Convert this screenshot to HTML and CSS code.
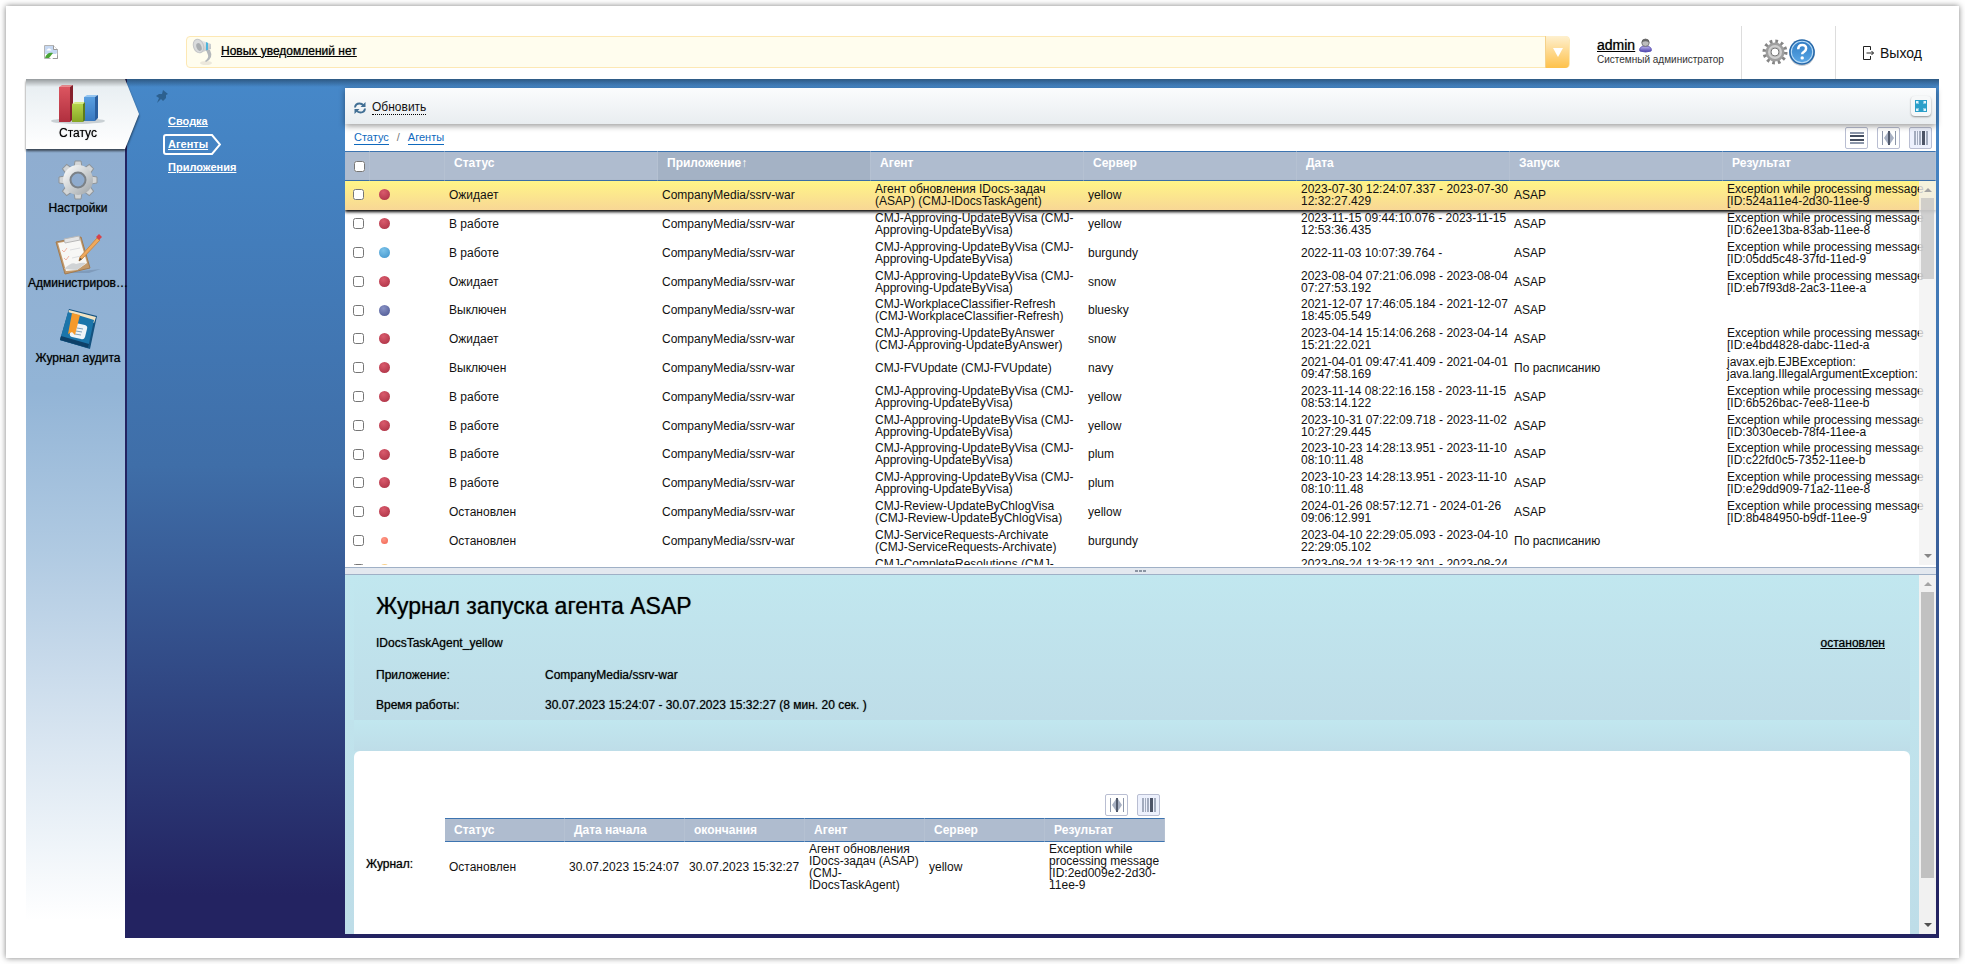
FILE: index.html
```
<!DOCTYPE html>
<html lang="ru">
<head>
    <meta charset="UTF-8">
    <meta name="viewport" content="width=device-width, initial-scale=1.0">
    <title>Агенты</title>
    <link rel="stylesheet" href="styles.css">
</head>
<body>
    <div class="page">
        <header class="header">
            <a class="logo" href="#" aria-label="Логотип">
                <svg width="16" height="16" viewBox="0 0 16 16">
                    <path d="M1.500 1.500h9l4 4v9h-13z" fill="#fff" stroke="#b4b4b4"/>
                    <path d="M2 2h8.500l3.500 4v4H2z" fill="#c6d8f2"/>
                    <path d="M10.500 1.500v4h4" fill="#fff" stroke="#9a9a9a"/>
                    <path d="M3.500 6.500q0-1.500 1.500-1.500 1-1.500 2 0 1.500 0 1.500 1.500z" fill="#fff"/>
                    <path d="M2 14c1-4 4-6 8-5l-4 5z" fill="#4aa436"/>
                    <path d="M7 15l7-6v2l-5 4z" fill="#fff"/>
                    <path d="M10 14.500h4.500v-3" fill="none" stroke="#999"/>
                </svg>
            </a>

            <div class="notice">
                <svg class="notice-icon" width="24" height="28" viewBox="0 0 24 28">
                    <defs>
                        <linearGradient id="horn" x1="0" y1="0" x2="1" y2="1">
                            <stop offset="0" stop-color="#fafafa"/>
                            <stop offset="1" stop-color="#b5b9bc"/>
                        </linearGradient>
                    </defs>
                    <ellipse cx="14" cy="25" rx="6" ry="2" fill="#ece8dc"/>
                    <path d="M6 1l13 5v5L8 15z" fill="url(#horn)"/>
                    <ellipse cx="6.500" cy="8" rx="5" ry="7" transform="rotate(-20 6.500 8)" fill="#d9dbdc" stroke="#c3c5c7"/>
                    <ellipse cx="7" cy="9" rx="2.500" ry="4" transform="rotate(-20 7 9)" fill="#a9adb0"/>
                    <path d="M14 4l2 1v7l-2 1z" fill="#4db5dc"/>
                    <path d="M14 12l4 0q2 4 1 7t-5 5l-1-1q4-3 3-6z" fill="#b4b8bb"/>
                </svg>
                <a class="notice-link" href="#">Новых уведомлений нет</a>
                <button class="notice-toggle" type="button" aria-label="Показать уведомления">
                    <svg width="10" height="9" viewBox="0 0 10 9"><path d="M0 0h10L5 9z" fill="#fff"/></svg>
                </button>
            </div>

            <div class="user">
                <div class="user-name">
                    <a href="#">admin</a>
                    <svg width="13" height="15" viewBox="0 0 14 16">
                        <defs>
                            <linearGradient id="suit" x1="0" y1="0" x2="0" y2="1">
                                <stop offset="0" stop-color="#b9b1ea"/>
                                <stop offset="1" stop-color="#4b3fae"/>
                            </linearGradient>
                        </defs>
                        <path d="M1 14c-1-3 1-5 4-5h4c3 0 5 2 4 5q-6 2-12 0z" fill="url(#suit)" stroke="#5a4fb0"/>
                        <circle cx="7" cy="5" r="4" fill="#bdbdbd" stroke="#777"/>
                        <path d="M3 5q0-4 4-4t4 4q-4-3-8 0z" fill="#666"/>
                    </svg>
                </div>
                <div class="user-role">Системный администратор</div>
            </div>

            <div class="tools">
                <button class="icon-button" type="button" aria-label="Настройки">
                    <svg width="26" height="26" viewBox="0 0 26 26">
                        <circle cx="13" cy="13" r="10.500" fill="none" stroke="#858585" stroke-width="4" stroke-dasharray="2.600 2.898"/>
                        <circle cx="13" cy="13" r="7" fill="none" stroke="#9f9f9f" stroke-width="5"/>
                        <circle cx="13" cy="13" r="6" fill="none" stroke="#cfcfcf" stroke-width="2"/>
                        <circle cx="13" cy="13" r="4" fill="#fff" stroke="#777"/>
                    </svg>
                </button>
                <button class="icon-button" type="button" aria-label="Справка">
                    <svg width="28" height="30" viewBox="0 0 26 28">
                        <defs>
                            <linearGradient id="help" x1="0" y1="0" x2="0" y2="1">
                                <stop offset="0" stop-color="#2f7cc4"/>
                                <stop offset="1" stop-color="#5aa7e6"/>
                            </linearGradient>
                        </defs>
                        <circle cx="13" cy="15" r="12" fill="#c9ccd0"/>
                        <circle cx="13" cy="14" r="12" fill="#2668a9"/>
                        <circle cx="13" cy="14" r="10" fill="url(#help)" stroke="#b9dcf7"/>
                        <path d="M9.500 11.500q0-4 3.700-4t3.600 3.300q0 2-2 3-1.600.8-1.600 2.400" fill="none" stroke="#fff" stroke-width="2.400"/>
                        <circle cx="13.200" cy="19.500" r="1.600" fill="#fff"/>
                    </svg>
                </button>
            </div>

            <a class="logout" href="#">
                <svg width="12" height="16" viewBox="0 0 12 16" fill="none" stroke="#222">
                    <path d="M8.500 5v-3.500h-7v13h7V11M4.500 8h7M9.500 6l2 2-2 2"/>
                </svg>
                Выход
            </a>
        </header>

        <main class="main">
            <nav class="nav">
                <a class="nav-item active" href="#">
                    <svg class="nav-icon" width="56" height="42" viewBox="0 0 56 42">
                        <defs>
                            <linearGradient id="red" x1="0" y1="0" x2="0" y2="1">
                                <stop offset="0" stop-color="#dc5560"/>
                                <stop offset="1" stop-color="#b02f3e"/>
                            </linearGradient>
                            <linearGradient id="green" x1="0" y1="0" x2="0" y2="1">
                                <stop offset="0" stop-color="#b5d34a"/>
                                <stop offset="1" stop-color="#86a625"/>
                            </linearGradient>
                            <linearGradient id="blue" x1="0" y1="0" x2="0" y2="1">
                                <stop offset="0" stop-color="#5a9fe0"/>
                                <stop offset="1" stop-color="#3878c0"/>
                            </linearGradient>
                        </defs>
                        <ellipse cx="28" cy="38" rx="27" ry="3" fill="#c9d0d4"/>
                        <path d="M9 4l3-2h11l-3 2z" fill="#ee8d92"/>
                        <path d="M9 4h11v35H9z" fill="url(#red)"/>
                        <path d="M20 4l3-2v34l-3 3z" fill="#86202c"/>
                        <path d="M34 14l3-2h11l-3 2z" fill="#95c5f0"/>
                        <path d="M34 14h11v24H34z" fill="url(#blue)"/>
                        <path d="M45 14l3-2v23l-3 3z" fill="#2b5f9f"/>
                        <path d="M22 21l3-2h10l-2 2z" fill="#d5ea85"/>
                        <path d="M22 21h11v18H22z" fill="url(#green)"/>
                        <path d="M33 21l2-2v18l-2 2z" fill="#5d7b1c"/>
                    </svg>
                    <span>Статус</span>
                </a>
                <a class="nav-item" href="#">
                    <svg class="nav-icon" width="40" height="42" viewBox="0 0 40 42">
                        <defs>
                            <linearGradient id="steel" x1="0" y1="0" x2="1" y2="1">
                                <stop offset="0" stop-color="#f4f5f5"/>
                                <stop offset="1" stop-color="#a9aeb1"/>
                            </linearGradient>
                        </defs>
                        <g transform="translate(20 22)">
                            <g fill="#d3d5d6" stroke="#8e9499">
                                <path d="M-4-13l1-6h6l1 6z"/>
                                <path d="M-4-13l1-6h6l1 6z" transform="rotate(45)"/>
                                <path d="M-4-13l1-6h6l1 6z" transform="rotate(90)"/>
                                <path d="M-4-13l1-6h6l1 6z" transform="rotate(135)"/>
                                <path d="M-4-13l1-6h6l1 6z" transform="rotate(180)"/>
                                <path d="M-4-13l1-6h6l1 6z" transform="rotate(225)"/>
                                <path d="M-4-13l1-6h6l1 6z" transform="rotate(270)"/>
                                <path d="M-4-13l1-6h6l1 6z" transform="rotate(315)"/>
                            </g>
                            <circle r="11" fill="none" stroke="url(#steel)" stroke-width="8"/>
                            <circle r="7.500" fill="#8fabcd" stroke="#7b8187" stroke-width="2"/>
                        </g>
                    </svg>
                    <span>Настройки</span>
                </a>
                <a class="nav-item" href="#">
                    <svg class="nav-icon" width="50" height="42" viewBox="0 0 50 42">
                        <path d="M8 40l40-4-12 4z" fill="#7f9bbb"/>
                        <path d="M3 9l25-5 9 31-25 6z" fill="#c39a6b" stroke="#a27b50"/>
                        <path d="M5 10l22-4 7 24-10 7-11 1z" fill="#f7f7f5"/>
                        <path d="M11 36q8-8 12-5 6-2 10-1l-9 7z" fill="#d0d3d5"/>
                        <path d="M11 6l15-3 1 4-15 3z" fill="#e4e4e4" stroke="#b8b8b8"/>
                        <path d="M9 17l2 2 3-4M11 25l2 2 3-4" fill="none" stroke="#f0b5a5"/>
                        <path d="M17 17l10-2M19 25l9-2" fill="none" stroke="#dcdee0"/>
                        <path d="M44 5l3 2-18 19-3 2 1-4z" fill="#f0a95c" stroke="#c58a4c"/>
                        <path d="M43 4l3-3 3 3-3 3z" fill="#d6424a"/>
                        <path d="M26 28l1-3 2 1z" fill="#444"/>
                    </svg>
                    <span>Администриров…</span>
                </a>
                <a class="nav-item" href="#">
                    <svg class="nav-icon" width="42" height="42" viewBox="0 0 42 42">
                        <path d="M12 1l28 7-7 33-30-9z" fill="#14527f"/>
                        <path d="M12 2l27 7-2 6-26-8z" fill="#f1e3c4"/>
                        <path d="M11 4l26 8-6 28L3 32z" fill="#1b75aa"/>
                        <path d="M3 32l28 8 1-4-28-8z" fill="#0e4068"/>
                        <path d="M14 14l14 3q3 1 2 4l-2 8q-1 3-4 2l-9-2q-3-1-2-4z" fill="#eef4f8"/>
                        <path d="M20 20l6 1M19 23l6 1M18 26l6 1" stroke="#7ea2bb"/>
                        <path d="M15 5l8 2-5 20-3-3-4 2z" fill="#f59a2b"/>
                    </svg>
                    <span>Журнал аудита</span>
                </a>
            </nav>

            <div class="subnav">
                <svg class="pin" width="12" height="13" viewBox="0 0 12 13">
                    <path d="M7 0l5 4-2 1v3l-3 3-2-2-4 4 2-5-3-2 3-2 3 0z" fill="#2c608f"/>
                </svg>
                <a class="subnav-link" href="#">Сводка</a>
                <a class="subnav-link current" href="#">
                    <svg class="tag" width="58" height="21" viewBox="0 0 58 21" fill="none" stroke="#fff" stroke-width="2">
                        <path d="M3 1h46l8 9.500-8 9.500H3q-2 0-2-2V3q0-2 2-2z"/>
                    </svg>Агенты</a>
                <a class="subnav-link" href="#">Приложения</a>
            </div>

            <section class="content">
                <div class="list-pane">
                    <div class="toolbar">
                        <button class="refresh" type="button">
                            <svg width="12" height="12" viewBox="0 0 12 12" fill="none" stroke="#416f94" stroke-width="2">
                                <path d="M1 5.500Q1.500 1.500 5.500 1.500q2.500 0 4 2M11 6.500q-.5 4-4.500 4-2.500 0-4-2"/>
                                <path d="M11.500 0v5h-5zM.5 12V7h5z" fill="#416f94" stroke="none"/>
                            </svg>
                            <span>Обновить</span>
                        </button>
                        <button class="fullscreen" type="button" aria-label="На весь экран">
                            <svg width="12" height="12" viewBox="0 0 12 12">
                                <path d="M0 0h12v12H0z" fill="#2b9fc9"/>
                                <path d="M1 1h3L3 2l1 1-1 1-1-1-1 1zM11 1v3l-1-1-1 1-1-1 1-1-1-1zM1 11V8l1 1 1-1 1 1-1 1 1 1zM11 11H8l1-1-1-1 1-1 1 1 1-1z" fill="#e2f4fb"/>
                            </svg>
                        </button>
                    </div>
                    <div class="path-bar">
                        <div class="breadcrumbs"><a href="#">Статус</a> <i>/</i> <a href="#">Агенты</a></div>
                        <div class="view-buttons">
                            <button type="button" aria-label="Строки">
                                <svg width="14" height="14" viewBox="0 0 14 14">
                                    <path d="M0 1h14v2H0zM0 11h14v2H0z" fill="#8d97aa"/><path d="M0 4h14v2H0zM0 8h14v2H0z" fill="#454e60"/>
                                </svg>
                            </button>
                            <button type="button" aria-label="Ширина столбцов">
                                <svg width="14" height="14" viewBox="0 0 14 14">
                                    <path d="M0 0h1v14H0zM13 0h1v14h-1z" fill="#8d97aa"/><path d="M6 1v12L2 7zM8 1v12l4-6z" fill="#a7b0c2"/><path d="M6 0h2v14H6z" fill="#515a6c"/>
                                </svg>
                            </button>
                            <button class="on" type="button" aria-label="Столбцы">
                                <svg width="14" height="14" viewBox="0 0 14 14">
                                    <path d="M0 0h2v14H0zM3 0h1v14H3zM5 0h2v14H5zM12 0h2v14h-2z" fill="#a3acbe"/><path d="M8 0h3v14H8z" fill="#4d5567"/>
                                </svg>
                            </button>
                        </div>
                    </div>
                    <div class="table-area">
                        <table class="grid">
                            <thead>
                                <tr>
                                    <th class="col-check"><input type="checkbox" aria-label="Выбрать все"></th>
                                    <th class="col-dot"></th>
                                    <th>Статус</th>
                                    <th class="sorted">Приложение↑</th>
                                    <th>Агент</th>
                                    <th>Сервер</th>
                                    <th>Дата</th>
                                    <th>Запуск</th>
                                    <th>Результат</th>
                                </tr>
                            </thead>
                            <tbody id="agents"></tbody>
                        </table>
                        <div class="scrollbar overlay">
                            <span class="arrow up"></span>
                            <span class="thumb"></span>
                            <span class="arrow down"></span>
                        </div>
                    </div>
                </div>

                <div class="splitter"><span></span><span></span><span></span></div>

                <div class="detail-pane">
                    <div class="detail">
                        <div class="summary">
                            <h1>Журнал запуска агента ASAP</h1>
                            <div class="summary-row">
                                <span>IDocsTaskAgent_yellow</span>
                                <a href="#">остановлен</a>
                            </div>
                            <dl>
                                <dt>Приложение:</dt>
                                <dd>CompanyMedia/ssrv-war</dd>
                                <dt>Время работы:</dt>
                                <dd>30.07.2023 15:24:07 - 30.07.2023 15:32:27 (8 мин. 20 сек. )</dd>
                            </dl>
                        </div>
                        <div class="strip"></div>
                        <div class="journal">
                            <div class="journal-label">Журнал:</div>
                            <div class="journal-body">
                                <div class="view-buttons">
                                    <button type="button" aria-label="Ширина столбцов">
                                        <svg width="14" height="14" viewBox="0 0 14 14">
                                            <path d="M0 0h1v14H0zM13 0h1v14h-1z" fill="#8d97aa"/><path d="M6 1v12L2 7zM8 1v12l4-6z" fill="#a7b0c2"/><path d="M6 0h2v14H6z" fill="#515a6c"/>
                                        </svg>
                                    </button>
                                    <button class="on" type="button" aria-label="Столбцы">
                                        <svg width="14" height="14" viewBox="0 0 14 14">
                                            <path d="M0 0h2v14H0zM3 0h1v14H3zM5 0h2v14H5zM12 0h2v14h-2z" fill="#a3acbe"/><path d="M8 0h3v14H8z" fill="#4d5567"/>
                                        </svg>
                                    </button>
                                </div>
                                <table class="grid small">
                                    <thead>
                                        <tr>
                                            <th>Статус</th>
                                            <th>Дата начала</th>
                                            <th>окончания</th>
                                            <th>Агент</th>
                                            <th>Сервер</th>
                                            <th>Результат</th>
                                        </tr>
                                    </thead>
                                    <tbody>
                                        <tr>
                                            <td>Остановлен</td>
                                            <td>30.07.2023 15:24:07</td>
                                            <td>30.07.2023 15:32:27</td>
                                            <td>Агент обновления IDocs-задач (ASAP) (CMJ-IDocsTaskAgent)</td>
                                            <td>yellow</td>
                                            <td>Exception while processing message [ID:2ed009e2-2d30-11ee-9</td>
                                        </tr>
                                    </tbody>
                                </table>
                            </div>
                        </div>
                    </div>
                    <div class="scrollbar">
                        <span class="arrow up"></span>
                        <span class="thumb"></span>
                        <span class="arrow down"></span>
                    </div>
                </div>
            </section>
        </main>
    </div>

    <script>
        const visa = 'CMJ-Approving-UpdateByVisa (CMJ-Approving-UpdateByVisa)';
        const error = 'Exception while processing message ';
        // dot, status, agent, server, date, start mode, result
        const agents = [
            ['red', 'Ожидает', 'Агент обновления IDocs-задач (ASAP) (CMJ-IDocsTaskAgent)', 'yellow', '2023-07-30 12:24:07.337 - 2023-07-30 12:32:27.429', 'ASAP', error + '[ID:524a11e4-2d30-11ee-9'],
            ['red', 'В работе', visa, 'yellow', '2023-11-15 09:44:10.076 - 2023-11-15 12:53:36.435', 'ASAP', error + '[ID:62ee13ba-83ab-11ee-8'],
            ['sky', 'В работе', visa, 'burgundy', '2022-11-03 10:07:39.764 -', 'ASAP', error + '[ID:05dd5c48-37fd-11ed-9'],
            ['red', 'Ожидает', visa, 'snow', '2023-08-04 07:21:06.098 - 2023-08-04 07:27:53.192', 'ASAP', error + '[ID:eb7f93d8-2ac3-11ee-a'],
            ['navy', 'Выключен', 'CMJ-WorkplaceClassifier-Refresh (CMJ-WorkplaceClassifier-Refresh)', 'bluesky', '2021-12-07 17:46:05.184 - 2021-12-07 18:45:05.549', 'ASAP', ''],
            ['red', 'Ожидает', 'CMJ-Approving-UpdateByAnswer (CMJ-Approving-UpdateByAnswer)', 'snow', '2023-04-14 15:14:06.268 - 2023-04-14 15:21:22.021', 'ASAP', error + '[ID:e4bd4828-dabc-11ed-a'],
            ['red', 'Выключен', 'CMJ-FVUpdate (CMJ-FVUpdate)', 'navy', '2021-04-01 09:47:41.409 - 2021-04-01 09:47:58.169', 'По расписанию', 'javax.ejb.EJBException: java.lang.IllegalArgumentException:'],
            ['red', 'В работе', visa, 'yellow', '2023-11-14 08:22:16.158 - 2023-11-15 08:53:14.122', 'ASAP', error + '[ID:6b526bac-7ee8-11ee-b'],
            ['red', 'В работе', visa, 'yellow', '2023-10-31 07:22:09.718 - 2023-11-02 10:27:29.445', 'ASAP', error + '[ID:3030eceb-78f4-11ee-a'],
            ['red', 'В работе', visa, 'plum', '2023-10-23 14:28:13.951 - 2023-11-10 08:10:11.48', 'ASAP', error + '[ID:c22fd0c5-7352-11ee-b'],
            ['red', 'В работе', visa, 'plum', '2023-10-23 14:28:13.951 - 2023-11-10 08:10:11.48', 'ASAP', error + '[ID:e29dd909-71a2-11ee-8'],
            ['red', 'Остановлен', 'CMJ-Review-UpdateByChlogVisa (CMJ-Review-UpdateByChlogVisa)', 'yellow', '2024-01-26 08:57:12.71 - 2024-01-26 09:06:12.991', 'ASAP', error + '[ID:8b484950-b9df-11ee-9'],
            ['coral', 'Остановлен', 'CMJ-ServiceRequests-Archivate (CMJ-ServiceRequests-Archivate)', 'burgundy', '2023-04-10 22:29:05.093 - 2023-04-10 22:29:05.102', 'По расписанию', ''],
            ['amber', 'Остановлен', 'CMJ-CompleteResolutions (CMJ-CompleteResolutions)', 'plum', '2023-08-24 13:26:12.301 - 2023-08-24 13:26:14.120', 'По расписанию', 'Response status: 0 updated 0']
        ];

        const body = document.getElementById('agents');
        agents.forEach(([dot, status, agent, server, date, mode, result], index) => {
            const row = document.createElement('tr');
            if (index === 0) {
                row.className = 'selected';
            }
            row.innerHTML = `
                <td class="col-check"><input type="checkbox" aria-label="${agent}"></td>
                <td class="col-dot"><span class="dot ${dot}"></span></td>
                <td>${status}</td>
                <td>CompanyMedia/ssrv-war</td>
                <td>${agent}</td>
                <td>${server}</td>
                <td>${date}</td>
                <td>${mode}</td>
                <td>${result}</td>`;
            body.appendChild(row);
        });
    </script>
</body>
</html>
```

FILE: styles.css
```
* {
    margin: 0;
    padding: 0;
    box-sizing: border-box;
}

body {
    font-family: "Liberation Sans", Arial, sans-serif;
    font-size: 12px;
    color: #111;
    background: #fff;
    height: 100vh;
    padding: 6px;
    overflow: hidden;
}

a {
    color: inherit;
}

button {
    font: inherit;
    color: inherit;
    border: none;
    background: none;
    cursor: pointer;
}

svg {
    display: block;
}

.page {
    height: 100%;
    padding: 20px;
    display: flex;
    flex-direction: column;
    background: #fff;
    box-shadow: 0 0 6px rgba(0, 0, 0, 0.5);
}

/* Header */
.header {
    height: 53px;
    flex: none;
    display: flex;
}

.logo {
    width: 160px;
    padding: 18px 17px;
}

.notice {
    flex: 1;
    height: 32px;
    margin-top: 10px;
    padding-left: 5px;
    display: flex;
    align-items: center;
    background: #fffdee;
    border: 1px solid #fde8b4;
    border-radius: 4px;
}

.notice-link {
    margin-left: 5px;
    padding-bottom: 3px;
    color: #000;
    text-shadow: 0 0 1px rgba(0, 0, 0, 0.6);
}

.notice-toggle {
    width: 24px;
    height: 32px;
    margin-left: auto;
    display: flex;
    align-items: center;
    justify-content: center;
    border-radius: 0 4px 4px 0;
    border-left: 1px solid #f5d28a;
    background: linear-gradient(#fef0cf, #fec14a);
}

.user {
    width: 171px;
    padding: 11px 0 0 27px;
    white-space: nowrap;
}

.user-name {
    display: flex;
    align-items: center;
    gap: 4px;
    height: 16px;
    font-size: 14px;
    color: #000;
    text-shadow: 0 0 1px rgba(0, 0, 0, 0.6);
}

.user-role {
    margin-top: 1px;
    font-size: 10px;
    line-height: 12px;
    color: #333;
}

.tools {
    width: 95px;
    padding-bottom: 2px;
    display: flex;
    align-items: center;
    justify-content: center;
    border-left: 1px solid #ddd;
    border-right: 1px solid #ddd;
}

.logout {
    width: 103px;
    display: flex;
    align-items: center;
    gap: 6px;
    padding-left: 26px;
    font-size: 14px;
    text-decoration: none;
}

/* Main */
.main {
    position: relative;
    flex: 1;
    min-height: 0;
    display: flex;
    background: linear-gradient(#4688c9, #3f6ea8 45%, #232361 95%);
}

.main::before {
    content: "";
    position: absolute;
    z-index: 3;
    top: 0;
    left: 0;
    right: 0;
    height: 8px;
    background: linear-gradient(rgba(0, 0, 0, 0.35), transparent);
}

.nav {
    width: 101px;
    flex: none;
    border-right: 2px solid #232361;
    background: linear-gradient(#8eabce, #92b4d6 36%, #b0cae2 55%, #fff 98%);
}

.nav-item {
    height: 75px;
    display: flex;
    flex-direction: column;
    align-items: center;
    justify-content: flex-end;
    padding: 0 0 8px 5px;
    position: relative;
    color: #000;
    line-height: 16px;
    text-decoration: none;
    white-space: nowrap;
    text-shadow: 0 0 1px rgba(0, 0, 0, 0.6);
}

.nav-item.active {
    height: 70px;
    z-index: 2;
    filter: drop-shadow(0 2px 1px rgba(0, 0, 0, 0.6));
    background: linear-gradient(#e6edf1, #fff);
}

.nav-item.active::after {
    content: "";
    position: absolute;
    z-index: 2;
    top: 0;
    left: 99px;
    width: 14px;
    height: 70px;
    clip-path: polygon(0 0, 100% 50%, 0 100%);
    background: linear-gradient(#e6edf1, #fff);
}

.subnav {
    width: 218px;
    flex: none;
    padding: 11px 0 0 29px;
    display: flex;
    flex-direction: column;
    align-items: flex-start;
}

.pin {
    margin-bottom: 6px;
}

.subnav-link {
    position: relative;
    margin-left: 12px;
    padding: 4px 0 3px;
    line-height: 16px;
    font-size: 11px;
    font-weight: bold;
    color: #fff;
}

.tag {
    position: absolute;
    top: 2px;
    left: -5px;
}

.content {
    flex: 1;
    min-width: 0;
    margin: 9px 3px 4px 0;
    display: grid;
    grid-template-rows: 4fr 8px 3fr;
    background: #fff;
}

/* Agents list */
.list-pane {
    min-height: 0;
    display: flex;
    flex-direction: column;
    padding-bottom: 2px;
}

.toolbar {
    position: relative;
    z-index: 1;
    height: 36px;
    flex: none;
    padding: 0 5px 0 9px;
    display: flex;
    align-items: center;
    justify-content: space-between;
    background: linear-gradient(#fbfcfd, #e9edf0);
    box-shadow: 0 2px 6px rgba(0, 0, 0, 0.4);
}

.refresh {
    display: flex;
    align-items: center;
    gap: 6px;
    padding-top: 3px;
}

.refresh span {
    line-height: 14px;
    border-bottom: 1px dotted #000;
}

.fullscreen {
    width: 20px;
    height: 20px;
    display: flex;
    align-items: center;
    justify-content: center;
    border-radius: 4px;
    background: #f6f8f9;
    box-shadow: 0 1px 2px rgba(0, 0, 0, 0.4);
}

.path-bar {
    height: 27px;
    flex: none;
    padding: 0 4px 0 9px;
    display: flex;
    align-items: center;
    justify-content: space-between;
}

.breadcrumbs {
    display: flex;
    gap: 8px;
    font-size: 11px;
    line-height: 14px;
    color: #777;
}

.breadcrumbs a {
    color: #0f69bd;
    text-decoration: none;
    border-bottom: 1px solid #0f69bd;
}

.breadcrumbs i {
    font-style: normal;
}

.view-buttons {
    display: flex;
    gap: 9px;
}

.view-buttons button {
    width: 23px;
    height: 22px;
    display: flex;
    align-items: center;
    justify-content: center;
    background: #fff;
    border: 1px solid #b9bed2;
    border-radius: 2px;
}

.view-buttons .on {
    background: #edf1fd;
}

.table-area {
    position: relative;
    flex: 1;
    min-height: 0;
    overflow: hidden;
}

.grid {
    width: 100%;
    table-layout: fixed;
    border-collapse: separate;
    border-spacing: 0;
}

.grid th {
    height: 30px;
    padding: 0 9px 6px;
    text-align: left;
    color: #fff;
    background: #afbccf;
    border-top: 1px solid #3d74b0;
    border-bottom: 1px solid #3d74b0;
    border-right: 1px solid #b5c1d2;
}

.grid .sorted {
    background: #a4b2c5;
}

.grid td {
    height: 29px;
    padding: 0 0 2px 4px;
    line-height: 12px;
    vertical-align: middle;
}

.grid tr:nth-child(5n) td {
    height: 28px;
}

.grid .selected td {
    background: linear-gradient(#fff587, #f8d795);
}

.grid .selected {
    position: relative;
    box-shadow: 0 2px 3px #000;
}

.grid .col-check {
    width: 25px;
    padding-left: 8px;
}

.grid th.col-check {
    padding: 0 0 0 9px;
}

.grid .col-dot {
    width: 75px;
    padding-left: 9px;
}

.grid input {
    display: block;
    width: 11px;
    height: 11px;
}

.dot {
    display: block;
    width: 11px;
    height: 11px;
    border-radius: 50%;
}

.dot.red {
    background: radial-gradient(circle at 40% 30%, #d95a6c, #a82f42);
}

.dot.sky {
    background: radial-gradient(circle at 40% 30%, #7cc3ea, #3f93cb);
}

.dot.navy {
    background: radial-gradient(circle at 40% 30%, #8791c4, #4a5490);
}

.dot.coral {
    width: 7px;
    height: 7px;
    margin-left: 2px;
    background: radial-gradient(circle at 40% 30%, #ff9a88, #f0604e);
}

.dot.amber {
    background: radial-gradient(circle at 40% 30%, #fde0a8, #f2a93c);
}

/* Scrollbars */
.scrollbar {
    width: 17px;
    padding: 7px 2px;
    display: flex;
    flex-direction: column;
    align-items: center;
    background: #f1f1f1;
}

.scrollbar .thumb {
    width: 13px;
    height: 83%;
    margin: 6px 0 auto;
    background: #c1c1c1;
}

.scrollbar.overlay {
    position: absolute;
    z-index: 1;
    top: 30px;
    right: 0;
    bottom: 0;
    background: rgba(241, 241, 241, 0.8);
}

.scrollbar.overlay .thumb {
    height: 22%;
    background: rgba(193, 193, 193, 0.7);
}

.arrow {
    border: 4px solid transparent;
}

.arrow.up {
    border-top: none;
    border-bottom-color: #a3a3a3;
}

.arrow.down {
    border-bottom: none;
    border-top-color: #505050;
}

.overlay .arrow.down {
    border-top-color: #868686;
}

.splitter {
    display: flex;
    align-items: center;
    justify-content: center;
    gap: 1px;
    background: #e3e8ef;
    border-top: 1px solid #9fb0c6;
    border-bottom: 1px solid #9fb0c6;
}

.splitter span {
    width: 3px;
    height: 2px;
    background: #8b95a3;
}

/* Agent details */
.detail-pane {
    min-height: 0;
    display: flex;
    background: linear-gradient(#c1e7ef, #bedde8);
}

.detail {
    flex: 1;
    min-width: 0;
    margin: 0 9px;
    display: flex;
    flex-direction: column;
    overflow: hidden;
}

.summary {
    height: 145px;
    flex: none;
    padding: 18px 25px 0 22px;
    color: #000;
    text-shadow: 0 0 1px rgba(0, 0, 0, 0.6);
    background: linear-gradient(#c1e7ef, #bedde8);
}

.summary h1 {
    font-size: 23px;
    line-height: 26px;
    font-weight: normal;
}

.summary-row {
    margin-top: 16px;
    display: flex;
    justify-content: space-between;
    line-height: 16px;
}

.summary dl {
    margin-top: 16px;
    display: grid;
    grid-template-columns: 169px 1fr;
    row-gap: 14px;
    line-height: 16px;
}

.strip {
    height: 31px;
    flex: none;
    background: linear-gradient(#c1e7ef, #bedde8);
}

.journal {
    flex: 1;
    display: flex;
    padding: 43px 12px 0;
    background: #fff;
    border-radius: 6px 6px 0 0;
}

.journal-label {
    width: 79px;
    padding-top: 63px;
    color: #000;
    text-shadow: 0 0 1px rgba(0, 0, 0, 0.6);
}

.journal-body {
    width: 720px;
}

.journal .view-buttons {
    justify-content: flex-end;
    padding: 0 5px 2px 0;
}

.grid.small th {
    height: 24px;
    padding-bottom: 0;
}

.grid.small td {
    height: 53px;
}
```
